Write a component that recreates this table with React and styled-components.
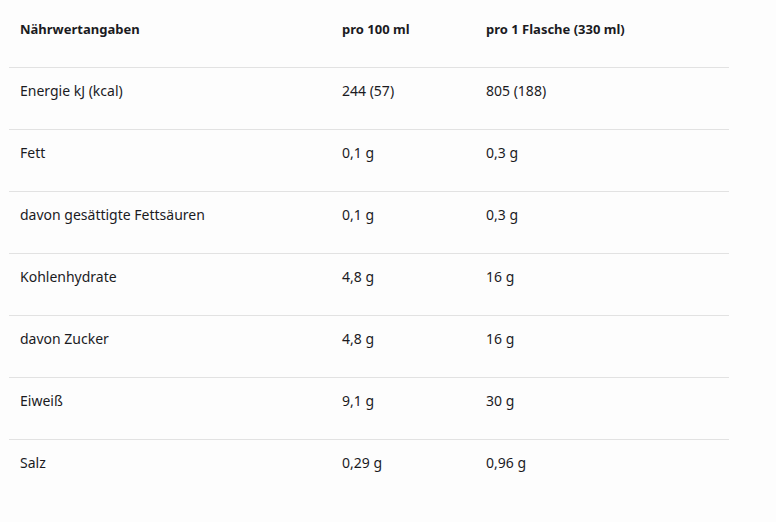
import React from 'react'
import styled, { createGlobalStyle } from 'styled-components'

const GlobalStyle = createGlobalStyle`
  html, body {
    margin: 0;
    padding: 0;
    background: #fdfdfd;
  }
  body {
    font-family: 'Noto Sans', 'Liberation Sans', sans-serif;
    color: #1b1b1f;
  }
`

const rows = [
  ['Energie kJ (kcal)', '244 (57)', '805 (188)'],
  ['Fett', '0,1 g', '0,3 g'],
  ['davon gesättigte Fettsäuren', '0,1 g', '0,3 g'],
  ['Kohlenhydrate', '4,8 g', '16 g'],
  ['davon Zucker', '4,8 g', '16 g'],
  ['Eiweiß', '9,1 g', '30 g'],
  ['Salz', '0,29 g', '0,96 g']
]

export default function App() {
  return (
    <>
      <GlobalStyle />
      <Wrapper>
        <Table>
          <colgroup>
            <Col $width="322px" />
            <Col $width="144px" />
            <Col />
          </colgroup>
          <thead>
            <HeadRow>
              <HeadCell>Nährwertangaben</HeadCell>
              <HeadCell>pro 100 ml</HeadCell>
              <HeadCell>pro 1 Flasche (330 ml)</HeadCell>
            </HeadRow>
          </thead>
          <tbody>
            {rows.map((r, i) => (
              <Row key={i} $last={i === rows.length - 1}>
                <Cell>{r[0]}</Cell>
                <Cell>{r[1]}</Cell>
                <Cell>{r[2]}</Cell>
              </Row>
            ))}
          </tbody>
        </Table>
      </Wrapper>
    </>
  )
}

const Wrapper = styled.div`
  padding: 0 0 0 9px;
  width: 720px;
  height: 522px;
`

const Table = styled.table`
  width: 720px;
  border-collapse: collapse;
  table-layout: fixed;
`

const Col = styled.col`
  width: ${p => p.$width || 'auto'};
`

const HeadRow = styled.tr`
  height: 67px;
  border-bottom: 1px solid #e2e2e2;
`

const HeadCell = styled.th`
  box-sizing: border-box;
  text-align: left;
  vertical-align: top;
  padding: 20px 11px 0;
  font-size: 13px;
  font-weight: 700;
  line-height: 18px;
`

const Row = styled.tr`
  height: 62px;
  border-bottom: ${p => (p.$last ? 'none' : '1px solid #e2e2e2')};
`

const Cell = styled.td`
  box-sizing: border-box;
  vertical-align: top;
  padding: 13px 11px 0;
  font-size: 14px;
  line-height: 20px;
`
